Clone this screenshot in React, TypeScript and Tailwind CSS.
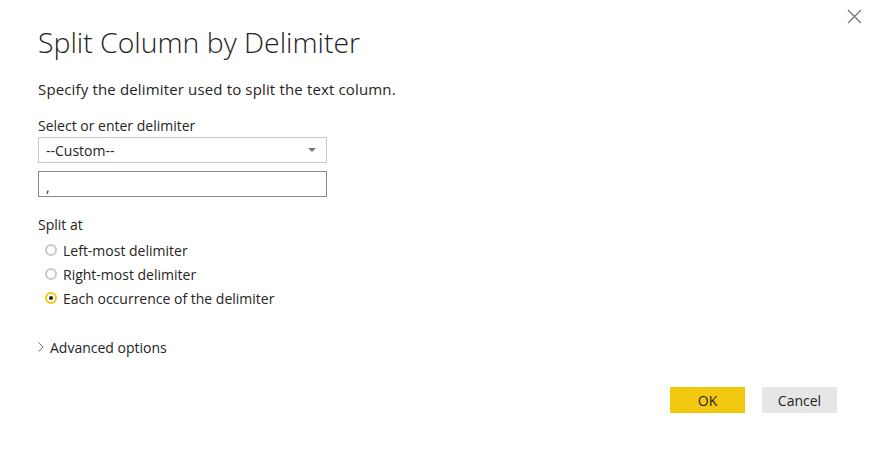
import React from "react";

const options = [
  { label: "Left-most delimiter", checked: false },
  { label: "Right-most delimiter", checked: false },
  { label: "Each occurrence of the delimiter", checked: true },
];

function Radio({ checked }: { checked: boolean }) {
  return (
    <span
      className={`flex h-[12px] w-[12px] shrink-0 items-center justify-center rounded-full border-2 ${
        checked ? "border-[#f2c811]" : "border-[#c8c8c8]"
      }`}
    >
      {checked && <span className="h-[4px] w-[4px] rounded-full bg-[#252423]" />}
    </span>
  );
}

export default function App() {
  return (
    <div className="relative h-[451px] w-[874px] overflow-hidden bg-white font-['Open_Sans',sans-serif] text-[#252423]">
      {/* close */}
      <button className="absolute right-[12px] top-[9px] h-[15px] w-[15px]">
        <svg viewBox="0 0 15 15" className="h-[15px] w-[15px]">
          <path d="M1 1 L14 14 M14 1 L1 14" stroke="#707070" strokeWidth="1.2" fill="none" />
        </svg>
      </button>

      <div className="flex flex-col pl-[38px] pr-[37px] pt-[24px]">
        <h1 className="text-[28.4px] font-light leading-[36px]">
          Split Column by Delimiter
        </h1>
        <p className="mt-[19px] text-[15px] leading-[20px] tracking-[0.15px]">
          Specify the delimiter used to split the text column.
        </p>

        <label className="mt-[17px] text-[14px] leading-[20px]">
          Select or enter delimiter
        </label>
        <div className="mt-[1px] flex h-[26px] w-[289px] items-center justify-between border border-[#c8c8c8] pl-[7px] pr-[10px] text-[14px]">
          <span>--Custom--</span>
          <svg viewBox="0 0 8 4" className="h-[4px] w-[8px]">
            <path d="M0 0 L8 0 L4 4 Z" fill="#777" />
          </svg>
        </div>
        <div className="mt-[8px] flex h-[26px] w-[289px] items-center border border-[#8a8886] pl-[7px] text-[14px]">
          <span className="translate-y-[2px]">,</span>
        </div>

        <div className="mt-[18px] text-[14px] leading-[20px]">Split at</div>
        <div className="mt-[3px] flex flex-col">
          {options.map((o) => (
            <div key={o.label} className="flex h-[24px] items-center gap-[6px] pl-[7px] text-[14px]">
              <Radio checked={o.checked} />
              <span>{o.label}</span>
            </div>
          ))}
        </div>

        <div className="mt-[27px] flex h-[20px] items-center gap-[6px] text-[14px]">
          <svg viewBox="0 0 6 10" className="h-[10px] w-[6px]">
            <path d="M0.5 0.5 L5 5 L0.5 9.5" stroke="#707070" strokeWidth="1" fill="none" />
          </svg>
          <span>Advanced options</span>
        </div>

        <div className="mt-[30px] flex justify-end gap-[17px]">
          <button className="h-[26px] w-[75px] bg-[#f2c811] text-[14px] text-[#252423]">OK</button>
          <button className="h-[26px] w-[75px] bg-[#e6e6e6] text-[14px] text-[#252423]">Cancel</button>
        </div>
      </div>
    </div>
  );
}
